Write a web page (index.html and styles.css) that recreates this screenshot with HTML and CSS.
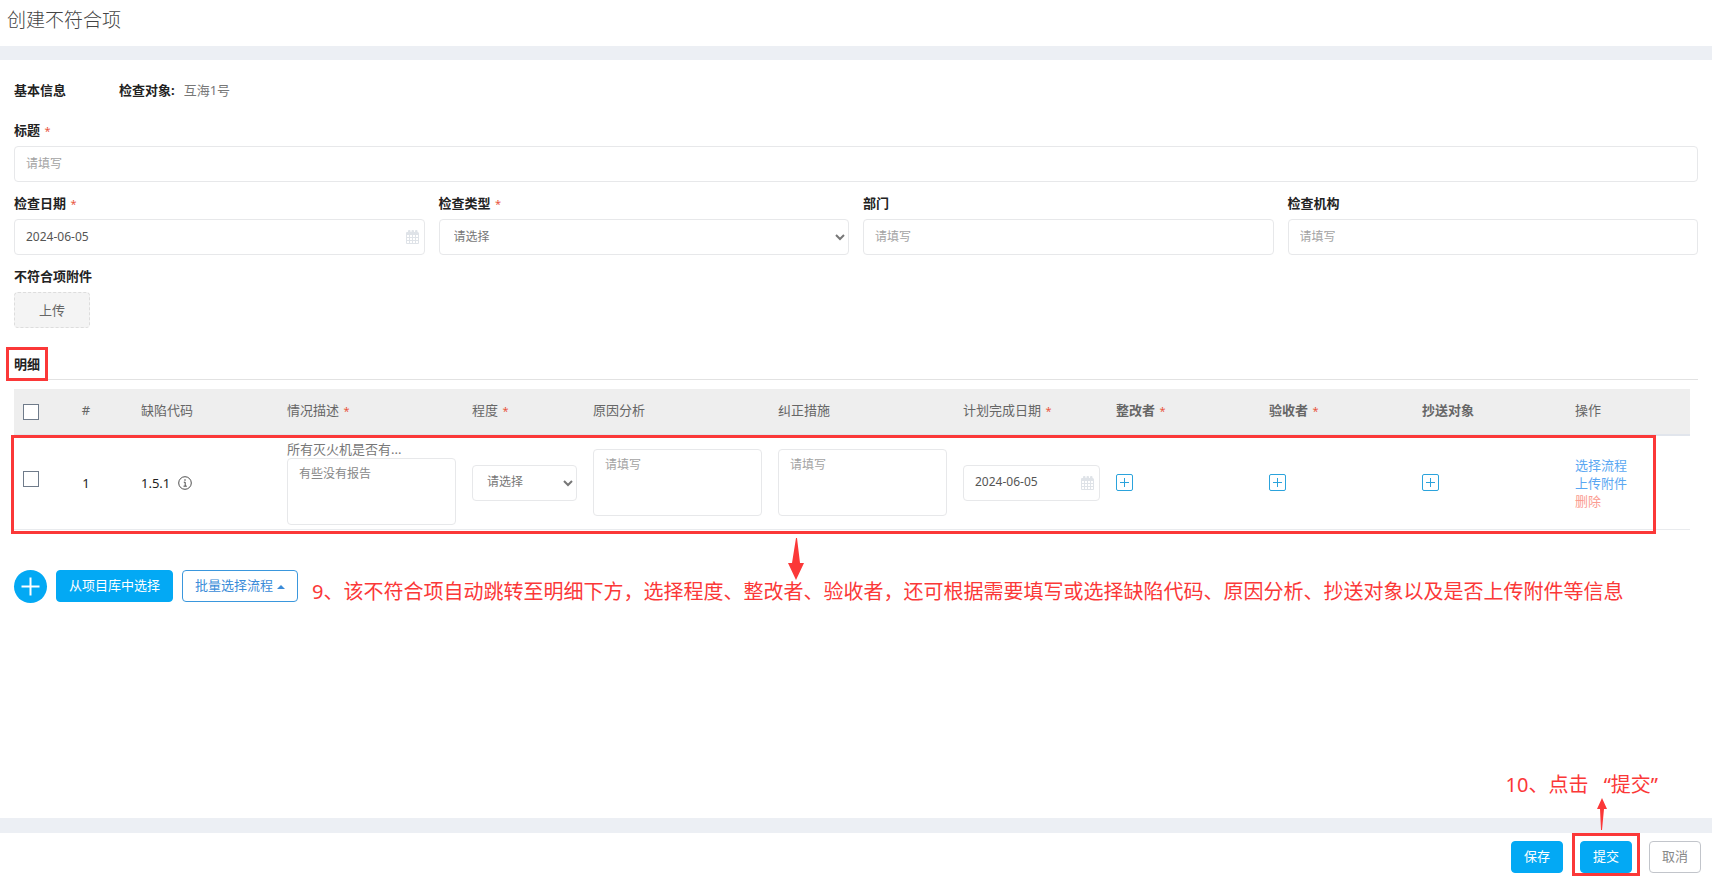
FILE: index.html
```
<!DOCTYPE html>
<html lang="zh-CN">
<head>
<meta charset="utf-8">
<title>创建不符合项</title>
<link rel="stylesheet" href="styles.css">
</head>
<body>
<svg class="sprite" aria-hidden="true">
  <symbol id="calendar" viewBox="0 0 13 14">
    <path fill="currentColor" fill-rule="evenodd" d="M1 2H2V1a1 1 0 0 1 1-1h.5a1 1 0 0 1 1 1v1h1V1a1 1 0 0 1 1-1H7a1 1 0 0 1 1 1v1h1V1a1 1 0 0 1 1-1h.5a1 1 0 0 1 1 1v1a1.500 1.500 0 0 1 1.500 1.500V13a1 1 0 0 1-1 1H1a1 1 0 0 1-1-1V3a1 1 0 0 1 1-1zM1 5v2h2V5zm3 0v2h2V5zm3 0v2h2V5zm3 0v2h2V5zM1 8v2h2V8zm3 0v2h2V8zm3 0v2h2V8zm3 0v2h2V8zM1 11v2h2v-2zm3 0v2h2v-2zm3 0v2h2v-2zm3 0v2h2v-2z"/>
  </symbol>
  <symbol id="plus-box" viewBox="0 0 17 17">
    <rect x=".5" y=".5" width="16" height="16" rx="1.500" fill="none" stroke="currentColor"/>
    <path d="M8.500 4v9M4 8.500h9" stroke="currentColor" fill="none"/>
  </symbol>
</svg>
<header class="page-header"><h1 class="page-title">创建不符合项</h1></header>
<main class="content">
  <div class="summary">
    <h2 class="section-title">基本信息</h2>
    <p class="target"><span class="target-label">检查对象:</span><span class="target-name">互海1号</span></p>
  </div>
  <div class="field">
    <label class="label" for="title">标题 <span class="required">*</span></label>
    <input class="control" id="title" type="text" placeholder="请填写">
  </div>
  <div class="field-row">
    <div class="field">
      <label class="label" for="date">检查日期 <span class="required">*</span></label>
      <div class="date"><input class="control" id="date" type="text" value="2024-06-05"><svg class="date-icon" aria-hidden="true"><use href="#calendar"/></svg></div>
    </div>
    <div class="field">
      <label class="label" for="type">检查类型 <span class="required">*</span></label>
      <select class="control select" id="type"><option>请选择</option></select>
    </div>
    <div class="field">
      <label class="label" for="dept">部门</label>
      <input class="control" id="dept" type="text" placeholder="请填写">
    </div>
    <div class="field">
      <label class="label" for="org">检查机构</label>
      <input class="control" id="org" type="text" placeholder="请填写">
    </div>
  </div>
  <div class="field">
    <span class="label">不符合项附件</span>
    <button class="upload" type="button">上传</button>
  </div>
  <div class="detail-head"><h2 class="detail-title">明细</h2></div>
  <div class="table-wrap">
    <table class="details">
      <colgroup>
        <col class="c-check"><col class="c-index"><col class="c-code"><col class="c-text"><col class="c-degree"><col class="c-text"><col class="c-text"><col class="c-person"><col class="c-person"><col class="c-person"><col class="c-person"><col class="c-action">
      </colgroup>
      <thead>
        <tr>
          <th class="check"><input class="tick" type="checkbox" aria-label="全选"></th>
          <th class="index">#</th>
          <th>缺陷代码</th>
          <th>情况描述 <span class="required">*</span></th>
          <th>程度 <span class="required">*</span></th>
          <th>原因分析</th>
          <th>纠正措施</th>
          <th>计划完成日期 <span class="required">*</span></th>
          <th class="strong">整改者 <span class="required">*</span></th>
          <th class="strong">验收者 <span class="required">*</span></th>
          <th class="strong">抄送对象</th>
          <th>操作</th>
        </tr>
      </thead>
      <tbody>
        <tr>
          <td class="check"><input class="tick" type="checkbox" aria-label="选择第1行"></td>
          <td class="index dark">1</td>
          <td class="dark"><span class="code">1.5.1<svg class="info" viewBox="0 0 14 14" aria-hidden="true"><circle cx="7" cy="7" r="6.300" fill="none" stroke="currentColor" stroke-width=".8"/><path d="M5.800 6.200H7.200v3.800M5.500 10.200h3.400" fill="none" stroke="currentColor" stroke-width=".8"/><circle cx="7" cy="4" r=".7" fill="currentColor"/></svg></span></td>
          <td><span class="item-name">所有灭火机是否有...</span><textarea class="control area" aria-label="情况描述">有些没有报告</textarea></td>
          <td><select class="control select" aria-label="程度"><option>请选择</option></select></td>
          <td><textarea class="control area" aria-label="原因分析" placeholder="请填写"></textarea></td>
          <td><textarea class="control area" aria-label="纠正措施" placeholder="请填写"></textarea></td>
          <td><div class="date"><input class="control" type="text" value="2024-06-05" aria-label="计划完成日期"><svg class="date-icon" aria-hidden="true"><use href="#calendar"/></svg></div></td>
          <td><button class="add" type="button" aria-label="添加整改者"><svg class="add-icon"><use href="#plus-box"/></svg></button></td>
          <td><button class="add" type="button" aria-label="添加验收者"><svg class="add-icon"><use href="#plus-box"/></svg></button></td>
          <td><button class="add" type="button" aria-label="添加抄送对象"><svg class="add-icon"><use href="#plus-box"/></svg></button></td>
          <td><a class="action" href="#">选择流程</a><a class="action" href="#">上传附件</a><a class="action danger" href="#">删除</a></td>
        </tr>
      </tbody>
    </table>
    <div class="row-mark"></div>
    <svg class="arrow-down" viewBox="0 0 16 42" aria-hidden="true"><path d="M8 0h1l3 25h4L8 42 0 25h4z" fill="currentColor"/></svg>
  </div>
  <div class="tools">
    <button class="round" type="button" aria-label="新增"><svg class="round-icon" viewBox="0 0 33 33"><path d="M16.500 7.500v18M7.500 16.500h18" stroke="currentColor" stroke-width="2" fill="none"/></svg></button>
    <button class="btn primary" type="button">从项目库中选择</button>
    <button class="btn outline" type="button">批量选择流程<span class="caret"></span></button>
    <p class="note">9、该不符合项自动跳转至明细下方，选择程度、整改者、验收者，还可根据需要填写或选择缺陷代码、原因分析、抄送对象以及是否上传附件等信息</p>
  </div>
  <div class="submit-note">
    <p class="note">10、点击&ensp; “提交”</p>
  </div>
</main>
<footer class="footer">
  <button class="btn primary" type="button">保存</button>
  <div class="submit">
    <button class="btn primary" type="button">提交</button>
    <div class="submit-mark"></div>
    <svg class="arrow-up" viewBox="0 0 10 32" aria-hidden="true"><path d="M5 0l5 11H7L5 32H4L3 11H0z" fill="currentColor"/></svg>
  </div>
  <button class="btn plain" type="button">取消</button>
</footer>
</body>
</html>
```
FILE: styles.css
```
* { box-sizing: border-box; }

body {
  margin: 0;
  height: 100vh;
  overflow: hidden;
  display: flex;
  flex-direction: column;
  background: #eceff4;
  color: #676a6c;
  font: 13px/18px "Noto Sans", "Noto Sans CJK SC", sans-serif;
}

h1, h2, p { margin: 0; }
button, input, select, textarea { font: inherit; color: inherit; }
.sprite { display: none; }

.page-header { background: #fff; padding: 6px 7px 12px; margin-bottom: 14px; }
.page-title { font-size: 19px; line-height: 28px; font-weight: 300; color: #444; }

.content {
  flex: 1;
  display: flex;
  flex-direction: column;
  background: #fff;
  padding: 21px 14px 10px;
}

.summary { display: flex; gap: 53px; margin-bottom: 22px; }
.section-title, .detail-title, .label, .target-label {
  font-size: 13px;
  line-height: 18px;
  font-weight: 700;
  color: #222;
}
.target { display: flex; gap: 9px; }
.target-name { color: #777; }

.field { margin-bottom: 12px; }
.label { display: block; margin-bottom: 7px; }
.required { color: #e9573f; font-size: 11px; line-height: 11px; font-weight: 400; margin-left: 1px; }
.field-row { display: grid; grid-template-columns: repeat(4, 1fr); gap: 14px; }

.control {
  display: block;
  width: 100%;
  height: 36px;
  padding: 0 11px 2px;
  border: 1px solid #e7e8ea;
  border-radius: 4px;
  background: #fff;
  font-size: 12px;
  color: #555;
  outline: 0;
}
.control::placeholder { color: #a3a3a3; opacity: 1; }
.select { color: #777; padding: 0 0 2px 10px; }
.area { height: 67px; padding: 6px 11px; resize: none; color: #888; overflow: hidden; }
.date { position: relative; }
.date-icon { position: absolute; right: 6px; top: 11px; width: 13px; height: 14px; color: #dfe3e8; }

.upload {
  display: block;
  width: 76px;
  height: 36px;
  border: 1px dashed #ddd;
  border-radius: 4px;
  background: #f4f4f4;
  color: #666;
}

.detail-head { padding: 15px 0 6px; border-bottom: 1px solid #e2e2e2; margin-bottom: 9px; }
.detail-title { position: relative; width: max-content; }
.detail-title::after {
  content: "";
  position: absolute;
  inset: -8px;
  border: 3px solid #fb3838;
}

.table-wrap { position: relative; padding-right: 8px; margin-bottom: 36px; }
.details { width: 100%; table-layout: fixed; border-collapse: separate; border-spacing: 0; }
.c-check { width: 25px; }
.c-index { width: 94px; }
.c-code { width: 146px; }
.c-text { width: 185px; }
.c-degree { width: 121px; }
.c-person { width: 153px; }
.c-action { width: 123px; }
.details th {
  height: 47px;
  padding: 0 8px 4px;
  background: #eee;
  border-bottom: 2px solid #e1e5ec;
  text-align: left;
  font-weight: 400;
  color: #666;
  white-space: nowrap;
}
.details th.strong { font-weight: 700; }
.details td { padding: 4px 8px; border-bottom: 1px solid #e9ebee; vertical-align: middle; }
.details th.check, .details td.check { padding: 0 0 0 9px; }
.details td.check { padding-bottom: 8px; }
.details th.index, .details td.index { text-align: center; }
.dark { color: #222; }
.tick {
  appearance: none;
  display: block;
  width: 16px;
  height: 16px;
  margin: 0;
  border: 1px solid #6f7b8a;
  background: #fff;
}
.code { display: flex; align-items: center; gap: 8px; }
.info { width: 14px; height: 14px; }
.item-name { display: block; white-space: nowrap; color: #777; }
.add { display: block; padding: 0; border: 0; background: none; color: #2ba3dc; }
.add-icon { display: block; width: 17px; height: 17px; }
.action { display: block; color: #5aa7f2; text-decoration: none; }
.danger { color: #fb9c91; }

.row-mark {
  position: absolute;
  left: -3px;
  right: 42px;
  top: 46px;
  bottom: -4px;
  border: 3px solid #fb3838;
}
.arrow-down { position: absolute; left: 774px; top: 149px; width: 16px; height: 42px; color: #fb3838; }

.tools { display: flex; align-items: center; gap: 9px; }
.round { width: 33px; height: 33px; padding: 0; border: 0; border-radius: 50%; background: #03a9f4; color: #fff; }
.round-icon { display: block; width: 33px; height: 33px; }
.btn {
  height: 32px;
  padding: 0 12px 2px;
  border: 1px solid #03a9f4;
  border-radius: 4px;
  background: #fff;
  white-space: nowrap;
}
.primary { background: #03a9f4; color: #fff; }
.outline { border-color: #3a97dd; color: #3a8bd8; }
.plain { border-color: #c2c5cb; color: #888; }
.caret {
  display: inline-block;
  margin-left: 4px;
  vertical-align: middle;
  border: 4px solid transparent;
  border-top: 0;
  border-bottom-color: currentColor;
}
.note { font-size: 20px; line-height: 28px; color: #fb3838; white-space: nowrap; }
.tools .note { padding: 12px 0 0 5px; }
.submit-note { display: flex; justify-content: flex-end; margin-top: auto; padding: 0 40px 9px 0; }

.footer {
  display: flex;
  justify-content: flex-end;
  gap: 17px;
  margin-top: 15px;
  padding: 8px 11px 4px;
  background: #fff;
}
.submit { position: relative; }
.submit-mark { position: absolute; inset: -8px -8px -3px; border: 3px solid #fb3838; }
.arrow-up { position: absolute; left: 17px; top: -43px; width: 10px; height: 32px; color: #fb3838; }
```
